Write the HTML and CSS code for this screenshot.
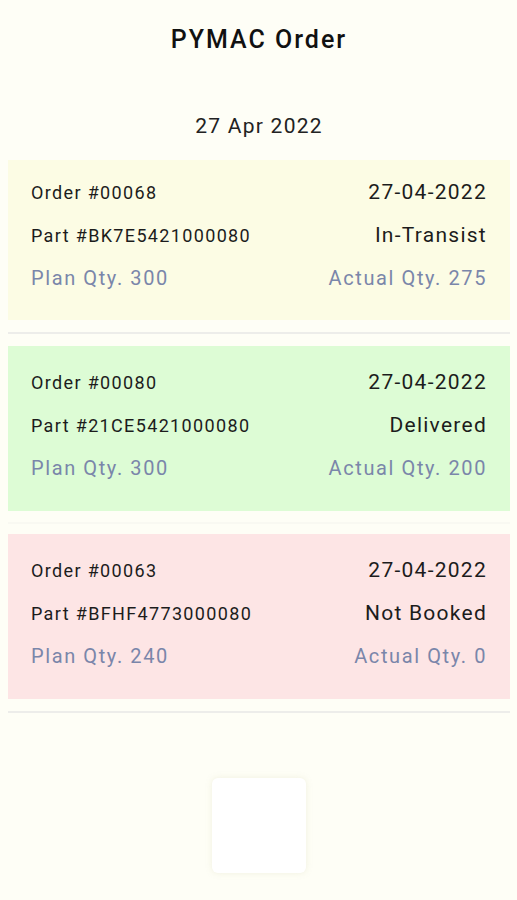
FILE: index.html
```html
<!DOCTYPE html>
<html lang="en">
<head>
  <meta charset="UTF-8">
  <meta name="viewport" content="width=device-width, initial-scale=1.0">
  <title>PYMAC Order</title>
  <link rel="stylesheet" href="styles.css">
</head>
<body>
  <header class="app-bar">
    <h1>PYMAC Order</h1>
  </header>

  <div class="day-label">27 Apr 2022</div>

  <ul class="order-list">
    <li class="order">
      <div class="order-card transit">
        <div class="order-row">
          <span class="order-no">Order #00068</span>
          <span class="order-date">27-04-2022</span>
        </div>
        <div class="order-row">
          <span class="part-no">Part #BK7E5421000080</span>
          <span class="status">In-Transist</span>
        </div>
        <div class="order-row qty">
          <span>Plan Qty. 300</span>
          <span>Actual Qty. 275</span>
        </div>
      </div>
      <hr class="divider">
    </li>

    <li class="order">
      <div class="order-card delivered">
        <div class="order-row">
          <span class="order-no">Order #00080</span>
          <span class="order-date">27-04-2022</span>
        </div>
        <div class="order-row">
          <span class="part-no">Part #21CE5421000080</span>
          <span class="status">Delivered</span>
        </div>
        <div class="order-row qty">
          <span>Plan Qty. 300</span>
          <span>Actual Qty. 200</span>
        </div>
      </div>
      <hr class="divider faint">
    </li>

    <li class="order">
      <div class="order-card not-booked">
        <div class="order-row">
          <span class="order-no">Order #00063</span>
          <span class="order-date">27-04-2022</span>
        </div>
        <div class="order-row">
          <span class="part-no">Part #BFHF4773000080</span>
          <span class="status">Not Booked</span>
        </div>
        <div class="order-row qty">
          <span>Plan Qty. 240</span>
          <span>Actual Qty. 0</span>
        </div>
      </div>
      <hr class="divider">
    </li>
  </ul>

  <div class="loader-box"></div>
</body>
</html>
```

FILE: styles.css
```css
body {
  margin: 0;
  padding: 0 7px 0 8px;
  min-height: 900px;
  box-sizing: border-box;
  background-color: #fefef6;
  font-family: Roboto, "Noto Sans", sans-serif;
  color: #1c1c1c;
  letter-spacing: 0.07em;
}

.app-bar {
  height: 78px;
  display: flex;
  align-items: center;
  justify-content: center;
}

.app-bar h1 {
  margin: 0;
  font-size: 25px;
  font-weight: 500;
  letter-spacing: 0.08em;
  color: #111;
}

.day-label {
  margin-top: 28px;
  height: 40px;
  line-height: 40px;
  text-align: center;
  font-size: 21px;
  letter-spacing: 0.06em;
  color: #222;
}

.order-list {
  list-style: none;
  margin: 14px 0 0;
  padding: 0;
}

.order-card {
  padding: 18px 23px 25px;
  display: flex;
  flex-direction: column;
  gap: 7px;
}

.order:first-child .order-card {
  padding-top: 14px;
  padding-bottom: 24px;
}

.order-card.transit { background-color: #fcfce4; }
.order-card.delivered { background-color: #ddfcd5; }
.order-card.not-booked { background-color: #fde5e5; }

.order-row {
  display: flex;
  justify-content: space-between;
  align-items: center;
  height: 36px;
}

.order-no,
.part-no {
  font-size: 18px;
  letter-spacing: 0.075em;
}

.order-date,
.status {
  font-size: 21px;
  letter-spacing: 0.06em;
}

.order-row.qty {
  font-size: 20px;
  letter-spacing: 0.08em;
  color: #7a86aa;
}

.divider {
  margin: 12px 0;
  border: 0;
  height: 2px;
  background-color: #ededea;
}

.divider.faint {
  margin: 11px 0 10px;
  background-color: #f9f9f2;
}

.loader-box {
  width: 94px;
  height: 95px;
  margin: 65px auto 0;
  background-color: #fff;
  border-radius: 6px;
  box-shadow: 0 0 6px rgba(200, 200, 160, 0.25);
}
```
